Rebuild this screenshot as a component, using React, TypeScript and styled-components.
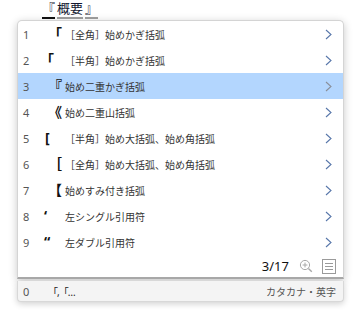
import styled, { createGlobalStyle } from "styled-components";

type Candidate = {
    glyph: string
    label: string
    offset?: number
}

const candidates: Candidate[] = [
    {glyph: "「", label: "［全角］始めかぎ括弧"},
    {glyph: "｢", label: "［半角］始めかぎ括弧", offset: -1},
    {glyph: "『", label: "始め二重かぎ括弧"},
    {glyph: "《", label: "始め二重山括弧"},
    {glyph: "[", label: "［半角］始め大括弧、始め角括弧", offset: -3},
    {glyph: "［", label: "［全角］始め大括弧、始め角括弧"},
    {glyph: "【", label: "始めすみ付き括弧"},
    {glyph: "‘", label: "左シングル引用符", offset: -4},
    {glyph: "“", label: "左ダブル引用符", offset: -4},
]

const GlobalStyle = createGlobalStyle`
  body {
    margin: 0;
    background: #ffffff;
    font-family: "Noto Sans", "Noto Sans CJK JP", sans-serif;
  }
`

export default function App() {
    return (
        <>
            <GlobalStyle/>
            <StyledPage>
                <StyledComposition>
                    <StyledSegment $active>『</StyledSegment>
                    <StyledSegment>概要</StyledSegment>
                    <StyledSegment>』</StyledSegment>
                </StyledComposition>
                <StyledPanel>
                    <StyledList>
                        {candidates.map((c, i) => {
                            const shift = c.offset ?? 0
                            return (
                                <StyledRow key={i} $selected={i === 2}>
                                    <StyledIndex>{i + 1}</StyledIndex>
                                    <StyledGlyph style={{marginLeft: shift, marginRight: -shift}}>{c.glyph}</StyledGlyph>
                                    <StyledLabel>{c.label}</StyledLabel>
                                    <Chevron selected={i === 2}/>
                                </StyledRow>
                            )
                        })}
                        <StyledStatus>
                            <StyledCount>3/17</StyledCount>
                            <ZoomIcon/>
                            <ListIcon/>
                        </StyledStatus>
                    </StyledList>
                    <StyledFooter>
                        <StyledIndex>0</StyledIndex>
                        <StyledPreview>「,「…</StyledPreview>
                        <StyledMode>カタカナ・英字</StyledMode>
                    </StyledFooter>
                </StyledPanel>
            </StyledPage>
        </>
    )
}

function Chevron(props: { selected: boolean }) {
    return (
        <StyledChevron width="7" height="11" viewBox="0 0 7 11">
            <path d="M1 1 L6 5.5 L1 10" fill="none" stroke={props.selected ? "#8a8f99" : "#5877aa"} strokeWidth="1.1"/>
        </StyledChevron>
    )
}

function ZoomIcon() {
    return (
        <svg width="14" height="14" viewBox="0 0 14 14">
            <circle cx="6" cy="6" r="4.6" fill="none" stroke="#a8a8a8" strokeWidth="1"/>
            <path d="M6 3.6 V8.4 M3.6 6 H8.4" stroke="#a8a8a8" strokeWidth="1"/>
            <path d="M9.4 9.4 L12.8 12.8" stroke="#a8a8a8" strokeWidth="1.4"/>
        </svg>
    )
}

function ListIcon() {
    return (
        <svg width="14" height="15" viewBox="0 0 14 15">
            <rect x="0.5" y="0.5" width="13" height="14" fill="none" stroke="#9a9a9a" strokeWidth="1"/>
            <path d="M3 4.5 H11 M3 7.5 H11 M3 10.5 H11" stroke="#9a9a9a" strokeWidth="1"/>
        </svg>
    )
}

const StyledPage = styled.div`
  width: 362px;
  height: 320px;
  padding-left: 17px;
  box-sizing: border-box;
`

const StyledComposition = styled.div`
  display: flex;
  gap: 2px;
  height: 20px;
  padding-left: 25px;
  box-sizing: border-box;
`

const StyledSegment = styled.span<{ $active?: boolean }>`
  font-size: 13px;
  line-height: 17px;
  height: 17px;
  color: #141830;
  border-bottom: 2px solid ${p => (p.$active ? "#111111" : "#a0a0a0")};
`

const StyledPanel = styled.div`
  width: 327px;
  display: flex;
  flex-direction: column;
  gap: 2px;
`

const StyledList = styled.div`
  background: #ffffff;
  border: 1px solid #d4d4d4;
  border-bottom: 2px solid #a9a9a9;
  border-radius: 5px 5px 0 0;
  box-shadow: 0 2px 8px rgba(0, 0, 0, 0.22);
  overflow: hidden;
`

const StyledRow = styled.div<{ $selected: boolean }>`
  display: flex;
  align-items: center;
  height: 26px;
  padding: 0 11px 0 5px;
  background: ${p => (p.$selected ? "#b3d6fe" : "transparent")};
`

const StyledIndex = styled.span`
  width: 25px;
  font-size: 11px;
  color: #555555;
`

const StyledGlyph = styled.span`
  width: 17px;
  font-size: 14px;
  font-weight: 700;
  color: #111111;
  line-height: 1;
`

const StyledLabel = styled.span`
  flex: 1;
  font-size: 10px;
  color: #333333;
  white-space: nowrap;
`

const StyledChevron = styled.svg`
  flex: none;
`

const StyledStatus = styled.div`
  display: flex;
  align-items: center;
  justify-content: flex-end;
  height: 22px;
  padding: 0 7px 0 0;
  gap: 9px;
`

const StyledCount = styled.span`
  font-size: 13px;
  color: #111111;
  margin-right: 1px;
`

const StyledFooter = styled.div`
  display: flex;
  align-items: center;
  height: 20px;
  padding: 0 7px 0 5px;
  background: #f4f4f4;
  border: 1px solid #d8d8d8;
  border-top: none;
  border-radius: 0 0 4px 4px;
  box-shadow: 0 2px 6px rgba(0, 0, 0, 0.18);
`

const StyledPreview = styled.span`
  flex: 1;
  font-size: 10px;
  color: #222222;
  letter-spacing: -1px;
`

const StyledMode = styled.span`
  font-size: 10px;
  color: #555555;
`
